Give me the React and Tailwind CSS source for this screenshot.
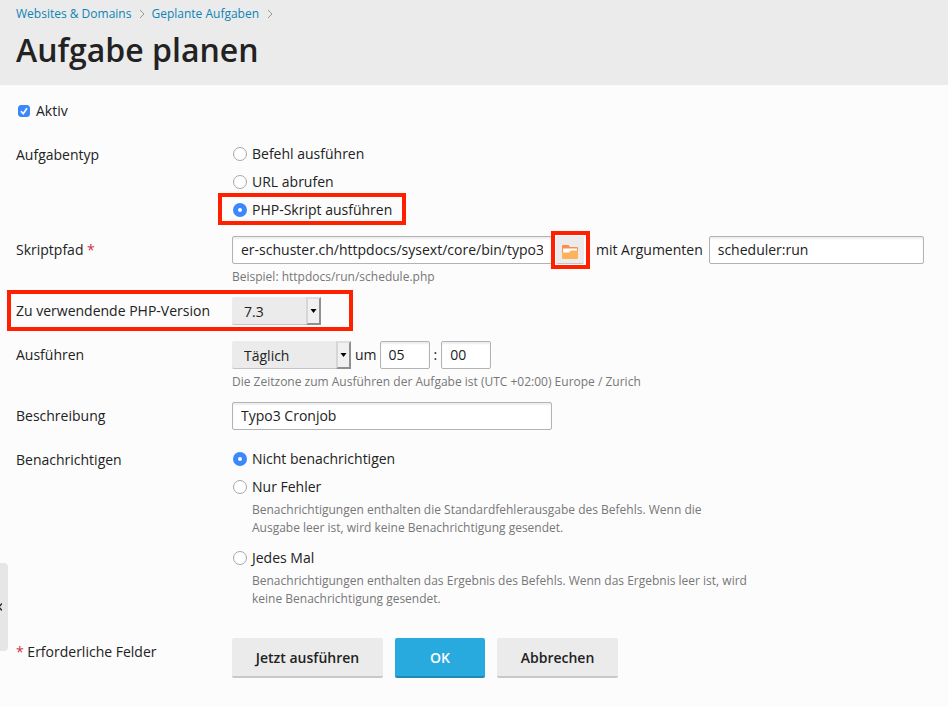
import { useState } from 'react'

const NOTIFY_OPTIONS = [
  { value: 'none', label: 'Nicht benachrichtigen' },
  {
    value: 'errors',
    label: 'Nur Fehler',
    hint: 'Benachrichtigungen enthalten die Standardfehlerausgabe des Befehls. Wenn die Ausgabe leer ist, wird keine Benachrichtigung gesendet.',
  },
  {
    value: 'always',
    label: 'Jedes Mal',
    hint: 'Benachrichtigungen enthalten das Ergebnis des Befehls. Wenn das Ergebnis leer ist, wird keine Benachrichtigung gesendet.',
  },
]

const TASK_TYPES = [
  { value: 'command', label: 'Befehl ausführen' },
  { value: 'url', label: 'URL abrufen' },
  { value: 'php', label: 'PHP-Skript ausführen', marked: true },
]

const inputClass =
  'h-7 rounded-xs border border-[#b3b3b3] bg-white px-2 pb-0.5 text-sm text-[#222] shadow-[inset_0_2px_2px_#eeeeee] outline-none'

// Red frame drawn around the settings that matter
function Marker({ className }) {
  return <span aria-hidden="true" className={`pointer-events-none absolute border-4 border-[#ff2000] ${className}`} />
}

function Crumb({ children }) {
  return (
    <li className="flex items-center">
      <a href="#" className="text-[#0c84b5]">{children}</a>
      <svg width="6" height="10" viewBox="0 0 6 10" fill="none" stroke="#999" className="mr-1.5 ml-2">
        <path d="M1 1l4 4-4 4" />
      </svg>
    </li>
  )
}

function Row({ label, htmlFor, required, className = '', labelClass = 'pt-1', children }) {
  return (
    <div className={`relative flex ${className}`}>
      <label htmlFor={htmlFor} className={`w-[216px] shrink-0 ${labelClass}`}>
        {label}
        {required && <span className="text-[#d02f48]"> *</span>}
      </label>
      <div className="min-w-0 flex-1">{children}</div>
    </div>
  )
}

function Radio({ name, value, checked, onChange, label, marked }) {
  return (
    <label className="relative flex w-fit items-center gap-[5px]">
      <input
        type="radio"
        name={name}
        value={value}
        checked={checked}
        onChange={() => onChange(value)}
        className="ml-px size-3.5 appearance-none rounded-full border border-[#a6a6a6] bg-white checked:border-[5px] checked:border-[#3b88fd]"
      />
      {label}
      {marked && <Marker className="-inset-x-3.5 -top-[7px] -bottom-[5px]" />}
    </label>
  )
}

function Select({ id, value, onChange, options, className, ...rest }) {
  return (
    <span className={`relative inline-block ${className}`}>
      <select
        id={id}
        value={value}
        onChange={(e) => onChange(e.target.value)}
        className="block h-7 w-full appearance-none rounded-xs border-b border-[#c4c4c4] bg-[#ebebeb] pt-0.5 pr-4 pl-3 text-sm text-[#222]"
        {...rest}
      >
        {options.map((o) => <option key={o}>{o}</option>)}
      </select>
      <span className="pointer-events-none absolute inset-y-0 right-0 flex w-[15px] items-center justify-center border-2 border-t-[#dedede] border-r-[#909090] border-b-[#909090] border-l-[#d6d6d6] bg-[#f0f0f0]">
        <svg width="7" height="4" viewBox="0 0 7 4"><path d="M0.5 0h6l-3 4z" fill="#000" /></svg>
      </span>
    </span>
  )
}

function Hint({ className = '', children }) {
  return <p className={`text-xs leading-[18px] text-[#777] ${className}`}>{children}</p>
}

function FolderIcon() {
  return (
    <svg width="16" height="14" viewBox="0 0 16 14">
      <path d="M0 1q0-1 1-1h5.5l1.5 2h7q1 0 1 1V10H0z" fill="#fb8d4e" />
      <path d="M1 3.5h14v5H1z" fill="#fff" />
      <path d="M0 7.5h7L9 5.5h7V13q0 1-1 1H1q-1 0-1-1z" fill="#ffb25e" />
    </svg>
  )
}

export default function App() {
  const [active, setActive] = useState(true)
  const [type, setType] = useState('php')
  const [path, setPath] = useState('er-schuster.ch/httpdocs/sysext/core/bin/typo3')
  const [args, setArgs] = useState('scheduler:run')
  const [version, setVersion] = useState('7.3')
  const [period, setPeriod] = useState('Täglich')
  const [hour, setHour] = useState('05')
  const [minute, setMinute] = useState('00')
  const [description, setDescription] = useState('Typo3 Cronjob')
  const [notify, setNotify] = useState('none')

  return (
    <div className="relative min-h-screen overflow-x-hidden bg-[#fcfcfc] font-['Open_Sans',sans-serif] text-sm leading-5 text-[#222]">
      <header className="bg-[#ebebeb] px-4 pt-1 pb-3.5">
        <nav aria-label="Breadcrumb">
          <ol className="flex text-xs leading-5">
            <Crumb>Websites &amp; Domains</Crumb>
            <Crumb>Geplante Aufgaben</Crumb>
          </ol>
        </nav>
        <h1 className="mt-1 text-[32px] leading-[43px] font-semibold">Aufgabe planen</h1>
      </header>

      <form className="px-4 pt-4 pb-7" onSubmit={(e) => e.preventDefault()}>
        <label className="flex w-fit items-center gap-1.5">
          <input
            type="checkbox"
            checked={active}
            onChange={(e) => setActive(e.target.checked)}
            className="peer ml-0.5 size-3 appearance-none rounded-[3px] border border-[#a6a6a6] bg-white checked:border-[#3b88fd] checked:bg-[#3b88fd]"
          />
          <svg viewBox="0 0 12 12" fill="none" stroke="#fff" strokeWidth="1.7" className="pointer-events-none invisible -ml-[18px] size-3 peer-checked:visible">
            <path d="M3 6.3l2.2 2.4L9 3.2" />
          </svg>
          Aktiv
        </label>

        <Row label="Aufgabentyp" className="mt-[23px]" labelClass="pt-px">
          <div className="flex flex-col gap-2">
            {TASK_TYPES.map((t) => (
              <Radio key={t.value} name="type" {...t} checked={type === t.value} onChange={setType} />
            ))}
          </div>
        </Row>

        <Row label="Skriptpfad" htmlFor="path" required className="mt-4">
          <div className="flex items-center">
            <input id="path" value={path} onChange={(e) => setPath(e.target.value)} className={`${inputClass} w-80`} />
            <button type="button" aria-label="Durchsuchen" className="relative ml-1 flex h-7 w-7 shrink-0 items-center justify-center rounded-xs border-b border-[#c4c4c4] bg-[#ebebeb] pt-1">
              <FolderIcon />
              <Marker className="-top-[5px] -right-1.5 -bottom-1.5 -left-[5px]" />
            </button>
            <label htmlFor="args" className="mr-1.5 ml-3 whitespace-nowrap">mit Argumenten</label>
            <input id="args" value={args} onChange={(e) => setArgs(e.target.value)} className={`${inputClass} w-[215px] min-w-0`} />
          </div>
          <Hint className="mt-1">Beispiel: httpdocs/run/schedule.php</Hint>
        </Row>

        <Row label="Zu verwendende PHP-Version" htmlFor="version" className="mt-[11px]">
          <Select id="version" value={version} onChange={setVersion} options={['7.3', '7.2', '7.1']} className="block w-[89px]" />
          <Marker className="-top-[7px] -bottom-1.5 -left-[9px] w-[346px]" />
        </Row>

        <Row label="Ausführen" htmlFor="period" className="mt-4">
          <div className="flex items-center gap-1">
            <Select id="period" value={period} onChange={setPeriod} options={['Täglich', 'Wöchentlich', 'Monatlich']} className="w-[119px]" />
            <span className="-mr-px">um</span>
            <input aria-label="Stunde" value={hour} onChange={(e) => setHour(e.target.value)} className={`${inputClass} w-[50px]`} />
            <span>:</span>
            <input aria-label="Minute" value={minute} onChange={(e) => setMinute(e.target.value)} className={`${inputClass} w-[50px]`} />
          </div>
          <Hint className="mt-1">Die Zeitzone zum Ausführen der Aufgabe ist (UTC +02:00) Europe / Zurich</Hint>
        </Row>

        <Row label="Beschreibung" htmlFor="description" className="mt-[11px]">
          <input id="description" value={description} onChange={(e) => setDescription(e.target.value)} className={`${inputClass} block w-80`} />
        </Row>

        <Row label="Benachrichtigen" className="mt-[19px]" labelClass="pt-px">
          <Radio name="notify" {...NOTIFY_OPTIONS[0]} checked={notify === 'none'} onChange={setNotify} />
          <div className="mt-2 flex flex-col gap-[11px]">
            {NOTIFY_OPTIONS.slice(1).map((o) => (
              <div key={o.value}>
                <Radio name="notify" value={o.value} label={o.label} checked={notify === o.value} onChange={setNotify} />
                <Hint className="mt-1 max-w-[520px] pl-5">{o.hint}</Hint>
              </div>
            ))}
          </div>
        </Row>

        <div className="mt-[30px] flex">
          <p className="w-[216px] shrink-0 pt-1"><span className="text-[#d02f48]">*</span> Erforderliche Felder</p>
          <div className="flex gap-3 font-semibold">
            <button type="button" className="h-10 w-[151px] rounded-xs border-b-2 border-[#c8c8c8] bg-[#ebebeb] pt-0.5">Jetzt ausführen</button>
            <button type="submit" className="h-10 w-[90px] rounded-xs border-b-2 border-[#2189b5] bg-[#28aade] pt-0.5 text-white">OK</button>
            <button type="button" className="h-10 w-[121px] rounded-xs border-b-2 border-[#c8c8c8] bg-[#ebebeb] pt-0.5">Abbrechen</button>
          </div>
        </div>
      </form>

      {/* Collapsed sidebar handle, mostly off the left edge */}
      <button type="button" aria-label="Seitenleiste" className="absolute top-[563px] left-0 h-[88px] w-2 rounded-r-sm bg-[#e6e6e6]">
        <svg width="2" height="8" viewBox="0 0 2 8" fill="none" stroke="#222" strokeWidth="1.3" className="absolute top-10 left-0">
          <path d="M2 0.5L-1 4l3 3.5" />
        </svg>
      </button>
    </div>
  )
}
